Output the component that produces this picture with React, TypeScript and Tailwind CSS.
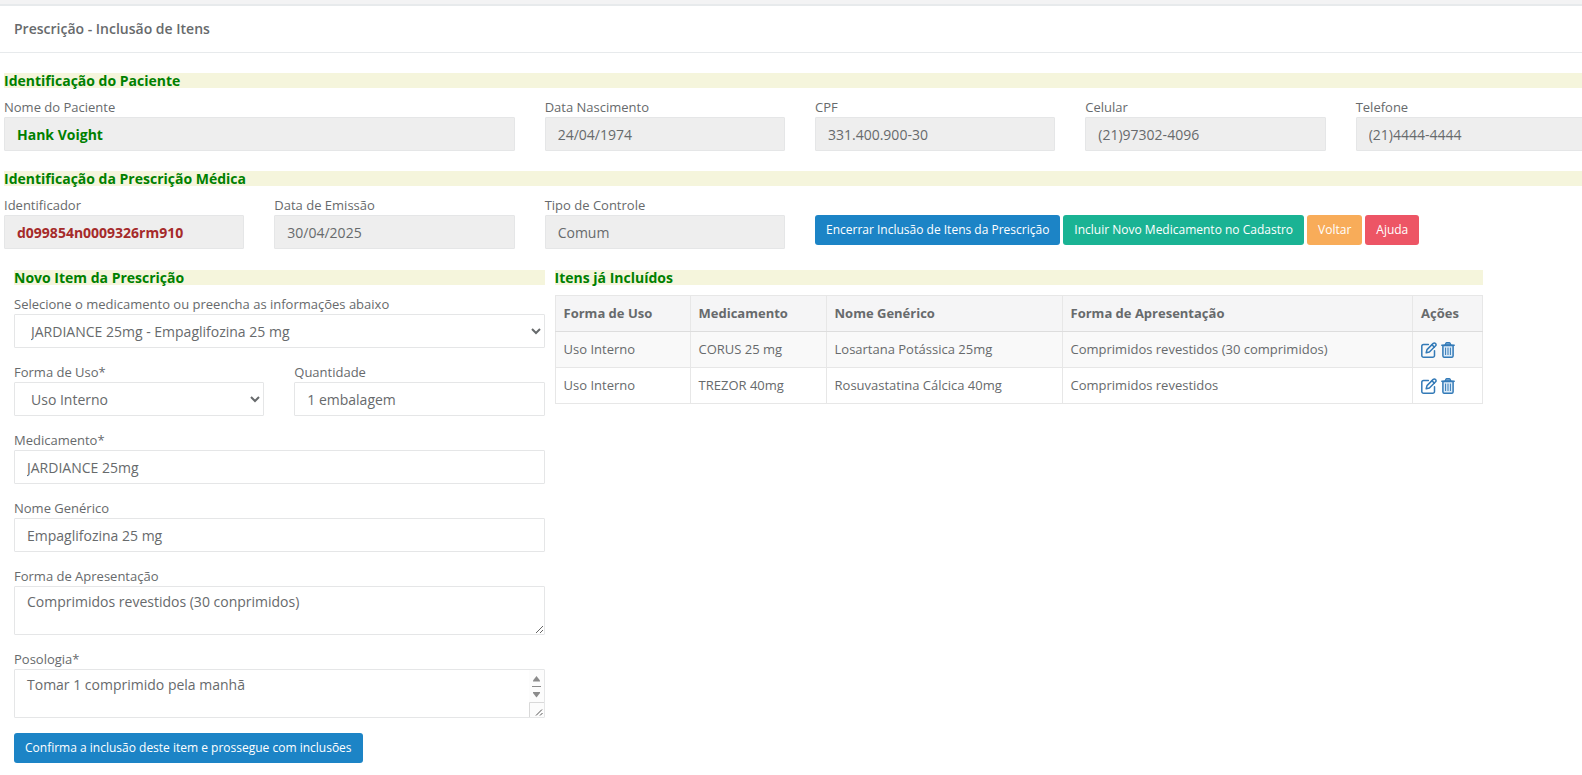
import { FC, ReactNode } from "react";

const itens = [
    {
        uso: "Uso Interno",
        medicamento: "CORUS 25 mg",
        generico: "Losartana Potássica 25mg",
        apresentacao: "Comprimidos revestidos (30 comprimidos)",
    },
    {
        uso: "Uso Interno",
        medicamento: "TREZOR 40mg",
        generico: "Rosuvastatina Cálcica 40mg",
        apresentacao: "Comprimidos revestidos",
    },
];

const control = "block w-full border border-[#e5e6e7] rounded-[1px] px-3 text-sm leading-5";
const labelClass = "block text-[13px] leading-[19px]";
const btn = "h-[30px] px-[11px] rounded-[3px] text-xs font-medium text-white whitespace-nowrap cursor-pointer";

const Titulo: FC<{ children: ReactNode }> = ({ children }) => (
    <h2 className="mb-2.5 bg-[#f5f5dc] text-sm leading-[15px] font-bold text-[#008000]">{children}</h2>
);

type CampoProps = {
    id: string;
    label: string;
    value: string;
    readOnly?: boolean;
    className?: string;
    inputClass?: string;
};

const Campo: FC<CampoProps> = ({ id, label, value, readOnly, className, inputClass = "" }) => (
    <div className={className}>
        <label htmlFor={id} className={labelClass}>{label}</label>
        <input
            id={id}
            type="text"
            defaultValue={value}
            readOnly={readOnly}
            className={`${control} h-[34px] ${readOnly ? "bg-[#eeeeee]" : "bg-white"} ${inputClass}`}
        />
    </div>
);

const IconeEditar: FC = () => (
    <svg width="16" height="16" viewBox="0 0 16 16" fill="none" stroke="currentColor" strokeWidth="1.5" strokeLinecap="round" strokeLinejoin="round">
        <path d="M7.4 2.500H2.600A1.800 1.800 0 0 0 .8 4.300v9.100a1.800 1.800 0 0 0 1.800 1.800h9.100a1.800 1.800 0 0 0 1.800-1.800V8.800" />
        <path d="M5.200 10.800l.8-3.200 6.200-6.200a1.500 1.500 0 0 1 2.200 0l.2.200a1.500 1.500 0 0 1 0 2.200L8.400 10z" />
        <path d="M11 2.800l2.300 2.300" />
    </svg>
);

const IconeExcluir: FC = () => (
    <svg width="14" height="16" viewBox="0 0 14 16" fill="none" stroke="currentColor" strokeLinecap="round" strokeLinejoin="round">
        <path d="M1.900 3.500h10.200v10.200a1.600 1.600 0 0 1-1.600 1.600h-7a1.600 1.600 0 0 1-1.600-1.600z" fill="#dcebf8" strokeWidth="1.500" />
        <path d="M4 3l.9-1.800c.2-.3.4-.5.8-.5h2.600c.4 0 .6.2.8.5L10 3z" fill="#79a9d4" strokeWidth="1.200" />
        <path d="M.8 3.300h12.400" strokeWidth="1.500" />
        <path d="M4.600 6v6.600M7 6v6.600M9.400 6v6.600" strokeWidth="1" />
    </svg>
);

// barra de rolagem do campo de posologia
const BarraRolagem: FC = () => (
    <svg width="15" height="47" viewBox="0 0 15 47" aria-hidden="true" className="pointer-events-none absolute right-px bottom-px">
        <rect width="15" height="47" fill="#fcfcfc" />
        <path d="M7.500 6L11 10.500v1H4v-1z" fill="#8b8b8b" />
        <path d="M3 16.500h9" stroke="#8b8b8b" />
        <path d="M7.500 27.500L4 23v-1h7v1z" fill="#8b8b8b" />
        <path d="M.5 47V32.500H15" fill="none" stroke="#d9d9d9" />
        <path d="M7 45.500l6-6M11 45.500l2.500-2.500" stroke="#555" strokeWidth="1" />
    </svg>
);

const App: FC = () => {
    return (
        <div className="min-h-screen overflow-x-hidden bg-white pb-3 font-['Open_Sans',sans-serif] text-[13px] text-[#676a6c]">
            <header className="border-t-4 border-[#f3f3f4]">
                <div className="border-t-2 border-b border-[#e7eaec] px-3.5 py-[13px]">
                    <h1 className="text-sm leading-5 font-semibold">Prescrição - Inclusão de Itens</h1>
                </div>
            </header>

            <section className="-mr-3.5 mt-5 pl-1">
                <Titulo>Identificação do Paciente</Titulo>
                <div className="grid grid-cols-6 gap-x-[30px]">
                    <Campo id="nome" label="Nome do Paciente" value="Hank Voight" readOnly className="col-span-2" inputClass="font-bold text-[#008000]" />
                    <Campo id="nascimento" label="Data Nascimento" value="24/04/1974" readOnly />
                    <Campo id="cpf" label="CPF" value="331.400.900-30" readOnly />
                    <Campo id="celular" label="Celular" value="(21)97302-4096" readOnly />
                    <Campo id="telefone" label="Telefone" value="(21)4444-4444" readOnly />
                </div>
            </section>

            <section className="-mr-3.5 mt-5 pl-1">
                <Titulo>Identificação da Prescrição Médica</Titulo>
                <div className="grid grid-cols-6 gap-x-[30px]">
                    <Campo id="identificador" label="Identificador" value="d099854n0009326rm910" readOnly inputClass="font-bold text-[#a52a2a]" />
                    <Campo id="emissao" label="Data de Emissão" value="30/04/2025" readOnly />
                    <Campo id="controle" label="Tipo de Controle" value="Comum" readOnly />
                    <div className="col-span-3 flex items-start gap-[3px] pt-[19px]">
                        <button type="button" className={`${btn} bg-[#1c84c6]`}>Encerrar Inclusão de Itens da Prescrição</button>
                        <button type="button" className={`${btn} bg-[#1ab394]`}>Incluir Novo Medicamento no Cadastro</button>
                        <button type="button" className={`${btn} bg-[#f8ac59]`}>Voltar</button>
                        <button type="button" className={`${btn} bg-[#ed5565]`}>Ajuda</button>
                    </div>
                </div>
            </section>

            <main className="mt-[21px] grid grid-cols-[4fr_7fr] gap-x-2.5 pl-3.5 pr-[99px]">
                <form>
                    <Titulo>Novo Item da Prescrição</Titulo>
                    <div className="flex flex-col gap-[15px]">
                        <div>
                            <label htmlFor="selecao" className={labelClass}>Selecione o medicamento ou preencha as informações abaixo</label>
                            <select id="selecao" className={`${control} h-[34px] bg-white`}>
                                <option>JARDIANCE 25mg - Empaglifozina 25 mg</option>
                            </select>
                        </div>
                        <div className="grid grid-cols-2 gap-x-[30px]">
                            <div>
                                <label htmlFor="uso" className={labelClass}>Forma de Uso*</label>
                                <select id="uso" className={`${control} h-[34px] bg-white`}>
                                    <option>Uso Interno</option>
                                    <option>Uso Externo</option>
                                </select>
                            </div>
                            <Campo id="quantidade" label="Quantidade" value="1 embalagem" />
                        </div>
                        <Campo id="medicamento" label="Medicamento*" value="JARDIANCE 25mg" />
                        <Campo id="generico" label="Nome Genérico" value="Empaglifozina 25 mg" />
                        <div>
                            <label htmlFor="apresentacao" className={labelClass}>Forma de Apresentação</label>
                            <textarea id="apresentacao" defaultValue="Comprimidos revestidos (30 conprimidos)" className={`${control} h-[49px] py-[5px]`} />
                        </div>
                        <div>
                            <label htmlFor="posologia" className={labelClass}>Posologia*</label>
                            <div className="relative">
                                <textarea id="posologia" defaultValue="Tomar 1 comprimido pela manhã" className={`${control} h-[49px] py-[5px]`} />
                                <BarraRolagem />
                            </div>
                        </div>
                        <button type="submit" className={`${btn} self-start bg-[#1c84c6]`}>Confirma a inclusão deste item e prossegue com inclusões</button>
                    </div>
                </form>

                <section>
                    <Titulo>Itens já Incluídos</Titulo>
                    <table className="w-full table-fixed border-collapse text-left leading-[19px] [&_td]:border [&_td]:border-[#e7e7e7] [&_td]:p-2 [&_th]:border [&_th]:border-[#e7e7e7] [&_th]:border-b-[#dddddd] [&_th]:p-2">
                        <thead className="bg-[#f5f5f6]">
                            <tr>
                                <th className="w-[135px]">Forma de Uso</th>
                                <th className="w-[136px]">Medicamento</th>
                                <th className="w-[236px]">Nome Genérico</th>
                                <th>Forma de Apresentação</th>
                                <th className="w-[70px]">Ações</th>
                            </tr>
                        </thead>
                        <tbody>
                            {itens.map((item) => (
                                <tr key={item.medicamento} className="odd:bg-[#f9f9f9]">
                                    <td>{item.uso}</td>
                                    <td>{item.medicamento}</td>
                                    <td>{item.generico}</td>
                                    <td>{item.apresentacao}</td>
                                    <td>
                                        <div className="flex items-center gap-1 text-[#337ab7]">
                                            <a href="#editar" title="Editar"><IconeEditar /></a>
                                            <a href="#excluir" title="Excluir"><IconeExcluir /></a>
                                        </div>
                                    </td>
                                </tr>
                            ))}
                        </tbody>
                    </table>
                </section>
            </main>
        </div>
    );
};

export default App;
